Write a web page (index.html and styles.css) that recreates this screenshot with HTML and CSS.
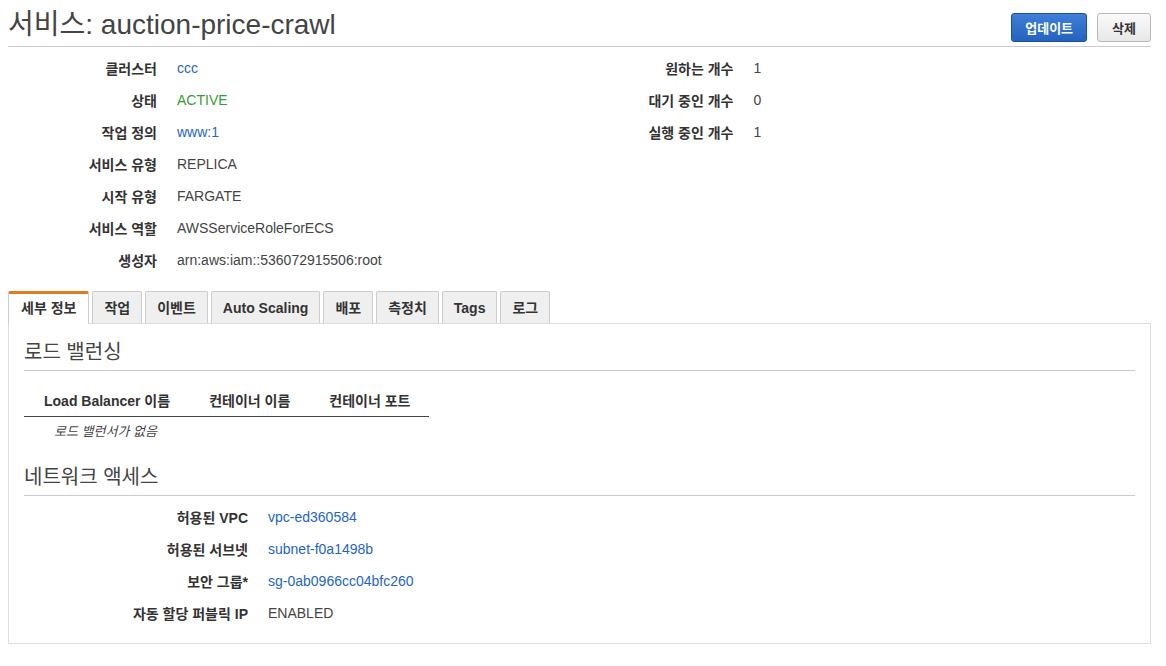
FILE: index.html
```html
<!DOCTYPE html>
<html lang="ko">
<head>
    <meta charset="UTF-8">
    <title>서비스: auction-price-crawl</title>
    <link rel="stylesheet" href="styles.css">
</head>
<body>
    <header class="page-header">
        <h1 class="page-title">서비스: auction-price-crawl</h1>
        <div class="header-actions">
            <button class="btn btn-primary">업데이트</button>
            <button class="btn">삭제</button>
        </div>
    </header>

    <section class="summary">
        <dl class="summary-col">
            <div class="field"><dt>클러스터</dt><dd><a href="#">ccc</a></dd></div>
            <div class="field"><dt>상태</dt><dd class="status-active">ACTIVE</dd></div>
            <div class="field"><dt>작업 정의</dt><dd><a href="#">www:1</a></dd></div>
            <div class="field"><dt>서비스 유형</dt><dd>REPLICA</dd></div>
            <div class="field"><dt>시작 유형</dt><dd>FARGATE</dd></div>
            <div class="field"><dt>서비스 역할</dt><dd>AWSServiceRoleForECS</dd></div>
            <div class="field"><dt>생성자</dt><dd>arn:aws:iam::536072915506:root</dd></div>
        </dl>
        <dl class="summary-col">
            <div class="field"><dt>원하는 개수</dt><dd>1</dd></div>
            <div class="field"><dt>대기 중인 개수</dt><dd>0</dd></div>
            <div class="field"><dt>실행 중인 개수</dt><dd>1</dd></div>
        </dl>
    </section>

    <ul class="tabs">
        <li class="tab active">세부 정보</li>
        <li class="tab">작업</li>
        <li class="tab">이벤트</li>
        <li class="tab">Auto Scaling</li>
        <li class="tab">배포</li>
        <li class="tab">측정치</li>
        <li class="tab">Tags</li>
        <li class="tab">로그</li>
    </ul>

    <div class="tab-panel">
        <h2 class="section-title">로드 밸런싱</h2>
        <table class="lb-table">
            <thead>
                <tr>
                    <th>Load Balancer 이름</th>
                    <th>컨테이너 이름</th>
                    <th>컨테이너 포트</th>
                </tr>
            </thead>
            <tbody>
                <tr><td class="empty" colspan="3">로드 밸런서가 없음</td></tr>
            </tbody>
        </table>

        <h2 class="section-title">네트워크 액세스</h2>
        <dl class="network">
            <div class="field"><dt>허용된 VPC</dt><dd><a href="#">vpc-ed360584</a></dd></div>
            <div class="field"><dt>허용된 서브넷</dt><dd><a href="#">subnet-f0a1498b</a></dd></div>
            <div class="field"><dt>보안 그룹*</dt><dd><a href="#">sg-0ab0966cc04bfc260</a></dd></div>
            <div class="field"><dt>자동 할당 퍼블릭 IP</dt><dd>ENABLED</dd></div>
        </dl>
    </div>
</body>
</html>
```

FILE: styles.css
```css
body {
    font-family: "Liberation Sans", "Noto Sans CJK KR", sans-serif;
    font-size: 14px;
    color: #444;
    margin: 0;
    padding: 0 15px 0 8px;
    background-color: #fff;
}
a {
    color: #1e66c0;
    text-decoration: none;
}

/* header */
.page-header {
    display: flex;
    justify-content: space-between;
    align-items: flex-end;
    height: 46px;
    border-bottom: 1px solid #ccc;
}
.page-title {
    margin: 0 0 5px;
    font-size: 28px;
    line-height: 32px;
    font-weight: normal;
    color: #444;
}
.header-actions {
    display: flex;
    gap: 10px;
    margin-bottom: 4px;
}
.btn {
    height: 29px;
    padding: 0 14px;
    font-family: inherit;
    font-size: 13px;
    font-weight: bold;
    color: #333;
    border: 1px solid #b8b8b8;
    border-radius: 3px;
    background: linear-gradient(#fafafa, #e8e8e8);
}
.btn-primary {
    padding: 0 13px;
    color: #fff;
    border-color: #1b4f9e;
    background: linear-gradient(#3f7fd6, #2462c0);
}

/* summary */
.summary {
    display: grid;
    grid-template-columns: 1fr 1fr;
    column-gap: 10px;
    padding-top: 5px;
}
.summary-col,
.network {
    margin: 0;
}
.field {
    display: grid;
    grid-template-columns: 149px 1fr;
    column-gap: 20px;
    align-items: center;
    height: 32px;
}
.field dt {
    text-align: right;
    font-weight: bold;
    color: #333;
}
.field dd {
    margin: 0;
}
.status-active {
    color: #3a9a3a;
}

/* tabs */
.tabs {
    display: flex;
    gap: 3px;
    list-style: none;
    margin: 15px 0 0;
    padding: 0;
}
.tab {
    height: 31px;
    line-height: 32px;
    padding: 0 11px;
    font-weight: bold;
    color: #333;
    background-color: #efefef;
    border: 1px solid #ccc;
    border-bottom: none;
    border-radius: 2px 2px 0 0;
}
.tab.active {
    height: 30px;
    line-height: 29px;
    padding: 0 12px;
    margin-bottom: -1px;
    background-color: #fff;
    border-top: 3px solid #dd7d22;
    position: relative;
}

.tab-panel {
    border: 1px solid #ddd;
    padding: 16px 15px 14px;
}
.section-title {
    margin: 0;
    padding-bottom: 6px;
    font-size: 20px;
    line-height: 24px;
    font-weight: normal;
    color: #444;
    border-bottom: 1px solid #ccc;
}
.lb-table {
    border-collapse: collapse;
    margin: 9px 0 18px;
}
.lb-table th {
    padding: 11px 19px 5px 20px;
    line-height: 20px;
    text-align: left;
    color: #333;
    border-bottom: 1px solid #444;
}
.lb-table .empty {
    padding: 5px 30px;
    line-height: 20px;
    font-style: italic;
    font-size: 13px;
}
.network {
    padding-top: 5px;
}
.network .field {
    grid-template-columns: 224px 1fr;
}
```
